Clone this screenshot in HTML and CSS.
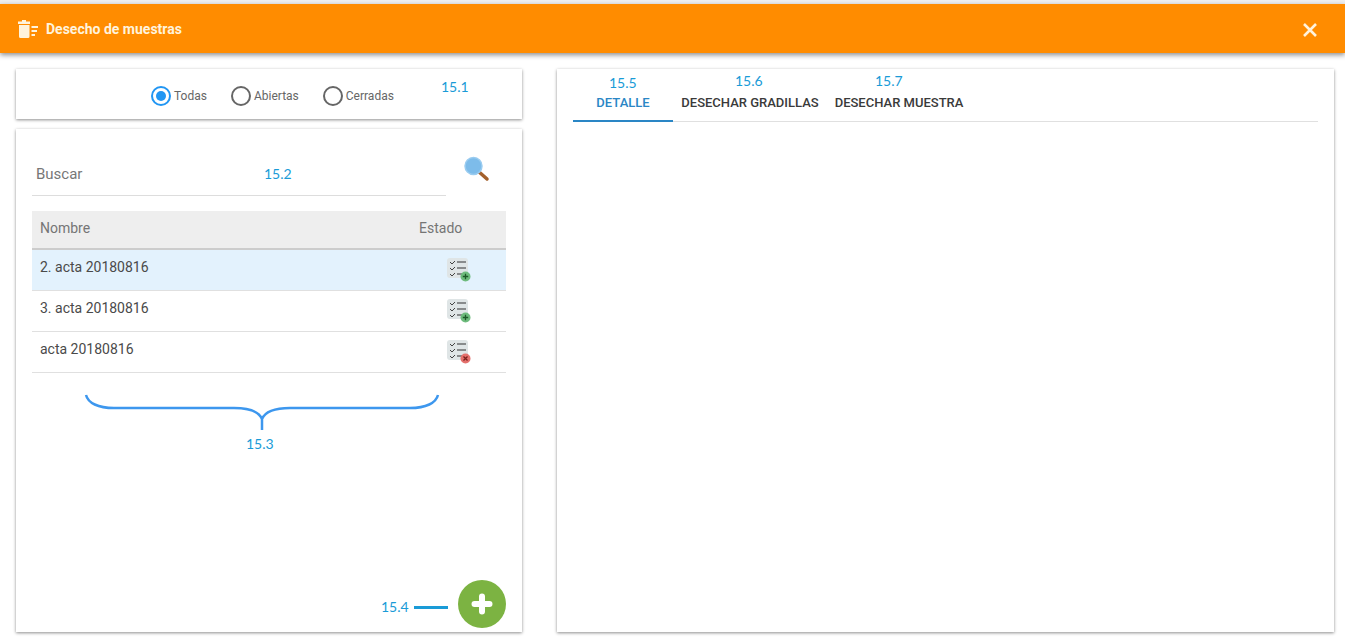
FILE: index.html
```html
<!DOCTYPE html>
<html lang="es">
<head>
    <meta charset="UTF-8">
    <meta name="viewport" content="width=device-width, initial-scale=1.0">
    <title>Desecho de muestras</title>
    <link rel="stylesheet" href="styles.css">
</head>
<body>
    <header class="topbar">
        <svg class="topbar-icon" width="22" height="18" viewBox="0 0 22 18">
            <path d="M5 0h4v1.500h4V4H1V1.500h4z" fill="#fff3dc"/>
            <path d="M2 5h10.500v11.500a1.500 1.500 0 0 1-1.500 1.500H3.500A1.500 1.500 0 0 1 2 16.500z" fill="#fff3dc"/>
            <path d="M14.500 6H21v2h-6.500zM14.500 10H20v2h-5.500zM14.500 14H18v2h-3.500z" fill="#fff3dc"/>
        </svg>
        <h1 class="topbar-title">Desecho de muestras</h1>
        <svg class="topbar-close" width="16" height="16" viewBox="0 0 16 16">
            <path d="M2 2l12 12M14 2L2 14" stroke="#fff3dc" stroke-width="2.600" fill="none"/>
        </svg>
    </header>

    <main class="content">
        <div class="left-col">
            <section class="card filter-card">
                <label class="radio radio-on"><span class="radio-mark"></span>Todas</label>
                <label class="radio"><span class="radio-mark"></span>Abiertas</label>
                <label class="radio"><span class="radio-mark"></span>Cerradas</label>
            </section>

            <section class="card list-card">
                <div class="search-row">
                    <div class="search-field">Buscar</div>
                    <svg class="search-icon" width="28" height="28" viewBox="0 0 28 28">
                        <path d="M15 15l9 8" stroke="#a3602c" stroke-width="3.500" stroke-linecap="round"/>
                        <circle cx="10.500" cy="10" r="8.500" fill="#7dbcea" stroke="#9accf0" stroke-width="1.500"/>
                    </svg>
                </div>

                <table class="acta-table">
                    <thead>
                        <tr>
                            <th>Nombre</th>
                            <th class="col-estado">Estado</th>
                        </tr>
                    </thead>
                    <tbody>
                        <tr class="selected">
                            <td>2. acta 20180816</td>
                            <td class="col-icon">
                                <svg width="24" height="24" viewBox="0 0 24 24">
                                    <rect x="0" y="0" width="21" height="20" rx="3" fill="#dfe5e6"/>
                                    <path d="M3 4l2 2 3-3M3 10l2 2 3-3M3 16l2 2 3-3" stroke="#444" stroke-width="1" fill="none"/>
                                    <path d="M10 4h9M10 10h9M10 16h5" stroke="#333" stroke-width="1.200"/>
                                    <circle cx="18.500" cy="18.500" r="5" fill="#6dbb7c"/>
                                    <path d="M15.800 18.500h5.400M18.500 15.800v5.400" stroke="#1c5a28" stroke-width="1.300"/>
                                </svg>
                            </td>
                        </tr>
                        <tr>
                            <td>3. acta 20180816</td>
                            <td class="col-icon">
                                <svg width="24" height="24" viewBox="0 0 24 24">
                                    <rect x="0" y="0" width="21" height="20" rx="3" fill="#dfe5e6"/>
                                    <path d="M3 4l2 2 3-3M3 10l2 2 3-3M3 16l2 2 3-3" stroke="#444" stroke-width="1" fill="none"/>
                                    <path d="M10 4h9M10 10h9M10 16h5" stroke="#333" stroke-width="1.200"/>
                                    <circle cx="18.500" cy="18.500" r="5" fill="#6dbb7c"/>
                                    <path d="M15.800 18.500h5.400M18.500 15.800v5.400" stroke="#1c5a28" stroke-width="1.300"/>
                                </svg>
                            </td>
                        </tr>
                        <tr>
                            <td>acta 20180816</td>
                            <td class="col-icon">
                                <svg width="24" height="24" viewBox="0 0 24 24">
                                    <rect x="0" y="0" width="21" height="20" rx="3" fill="#dfe5e6"/>
                                    <path d="M3 4l2 2 3-3M3 10l2 2 3-3M3 16l2 2 3-3" stroke="#444" stroke-width="1" fill="none"/>
                                    <path d="M10 4h9M10 10h9M10 16h5" stroke="#333" stroke-width="1.200"/>
                                    <circle cx="18.500" cy="18.500" r="5" fill="#e4706c"/>
                                    <path d="M16.500 16.500l4 4M20.500 16.500l-4 4" stroke="#7a1f1c" stroke-width="1.300"/>
                                </svg>
                            </td>
                        </tr>
                    </tbody>
                </table>

                <button class="fab" type="button">
                    <svg width="22" height="22" viewBox="0 0 22 22">
                        <path d="M11 3.500v15M3.500 11h15" stroke="#fff" stroke-width="6" stroke-linecap="round"/>
                    </svg>
                </button>
            </section>
        </div>

        <section class="card detail-card">
            <nav class="tabs">
                <a class="tab tab-active">DETALLE</a>
                <a class="tab tab-gradillas">DESECHAR GRADILLAS</a>
                <a class="tab tab-muestra">DESECHAR MUESTRA</a>
            </nav>
        </section>
    </main>

    <!-- anotaciones del manual sobre la captura -->
    <span class="note note-1">15.1</span>
    <span class="note note-2">15.2</span>
    <span class="note note-3">15.3</span>
    <span class="note note-4">15.4</span>
    <span class="note note-5">15.5</span>
    <span class="note note-6">15.6</span>
    <span class="note note-7">15.7</span>
    <span class="note-dash"></span>
    <svg class="brace" width="356" height="40" viewBox="0 0 356 40">
        <path d="M2 2C4 10 14 15 30 15H150C165 15 175 19 178 26C181 19 191 15 206 15H326C342 15 352 10 354 2M178 24V37" stroke="#3d97ee" stroke-width="2.500" fill="none"/>
    </svg>
</body>
</html>
```

FILE: styles.css
```css
* {
    box-sizing: border-box;
    margin: 0;
    padding: 0;
}

html, body {
    height: 100%;
    overflow: hidden;
}

body {
    font-family: Roboto, Arial, sans-serif;
    background-color: #fff;
    color: #333;
    padding-top: 4px;
    background-image: linear-gradient(#efefef 4px, #fff 4px);
}

.topbar {
    height: 49px;
    background-color: #ff8c00;
    color: #fff3dc;
    display: flex;
    align-items: center;
    padding: 0 27px 0 17px;
    box-shadow: 0 2px 5px rgba(0, 0, 0, 0.45);
    position: relative;
}

.topbar-icon {
    margin-right: 7px;
}

.topbar-title {
    font-size: 14px;
    font-weight: 700;
    flex: 1;
}

.topbar-close {
    margin-top: 2px;
}

.content {
    display: flex;
    gap: 35px;
    padding: 16px 11px 0 16px;
    height: 579px;
}

.card {
    background-color: white;
    box-shadow: 0 1px 3px rgba(0, 0, 0, 0.45);
}

.left-col {
    width: 506px;
    display: flex;
    flex-direction: column;
    gap: 10px;
}

.filter-card {
    height: 50px;
    display: flex;
    align-items: center;
    padding: 4px 0 0 135px;
}

.radio {
    display: flex;
    align-items: center;
    font-size: 12px;
    color: #666;
    margin-right: 24px;
}

.radio-mark {
    width: 20px;
    height: 20px;
    border: 2px solid #666;
    border-radius: 50%;
    margin-right: 3px;
    position: relative;
}

.radio-on .radio-mark {
    border-color: #2196f3;
}

.radio-on .radio-mark::after {
    content: "";
    position: absolute;
    top: 3px;
    left: 3px;
    width: 10px;
    height: 10px;
    border-radius: 50%;
    background-color: #2196f3;
}

.list-card {
    flex: 1;
    padding: 0 16px;
    position: relative;
}

.search-row {
    display: flex;
    height: 82px;
    padding-top: 22px;
}

.search-field {
    width: 414px;
    height: 45px;
    padding: 14px 4px 0;
    font-size: 15px;
    color: #777;
    border-bottom: 1px solid #ddd;
}

.search-icon {
    margin: 5px 0 0 17px;
}

.acta-table {
    width: 100%;
    border-collapse: collapse;
    font-size: 14px;
}

.acta-table th {
    height: 38px;
    padding: 0 8px 4px;
    background-color: #eee;
    color: #757575;
    font-weight: 400;
    text-align: left;
    border-bottom: 2px solid #ccc;
}

.acta-table th.col-estado {
    width: 90px;
    padding-left: 3px;
}

.acta-table td {
    height: 41px;
    padding: 0 8px 6px;
    color: #4a4a4a;
    border-bottom: 1px solid #e0e0e0;
}

.acta-table td.col-icon {
    padding: 0 0 0 31px;
}

.col-icon svg {
    display: block;
}

.acta-table tr.selected td {
    background-color: #e3f2fd;
}

.fab {
    position: absolute;
    right: 16px;
    bottom: 4px;
    width: 48px;
    height: 48px;
    border: none;
    border-radius: 50%;
    background-color: #7cb342;
    display: flex;
    align-items: center;
    justify-content: center;
}

.detail-card {
    flex: 1;
    padding: 0 16px;
}

.tabs {
    display: flex;
    height: 53px;
    border-bottom: 1px solid #e0e0e0;
}

.tab {
    font-size: 13px;
    font-weight: 500;
    color: #3a3a3a;
    padding-top: 26px;
    text-align: center;
    white-space: nowrap;
}

.tab-active {
    width: 100px;
    height: 53px;
    color: #2a86c5;
    border-bottom: 2px solid #2a86c5;
}

.tab-gradillas {
    width: 146px;
    margin-left: 4px;
}

.tab-muestra {
    width: 130px;
    margin-left: 11px;
}

.note {
    position: absolute;
    font-family: Lato, sans-serif;
    font-size: 14px;
    line-height: 17px;
    color: #1a9bd7;
}

.note-1 { left: 441px; top: 78px; }
.note-2 { left: 264px; top: 165px; }
.note-3 { left: 246px; top: 435px; }
.note-4 { left: 381px; top: 598px; }
.note-5 { left: 609px; top: 74px; }
.note-6 { left: 735px; top: 72px; }
.note-7 { left: 875px; top: 72px; }

.note-dash {
    position: absolute;
    left: 414px;
    top: 606px;
    width: 34px;
    height: 3px;
    background-color: #1a9bd7;
}

.brace {
    position: absolute;
    left: 84px;
    top: 393px;
}
```
